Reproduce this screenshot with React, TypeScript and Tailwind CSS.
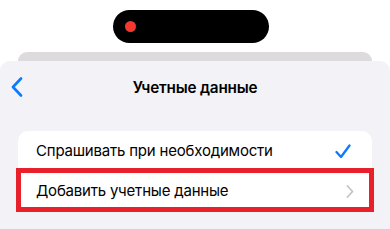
const font = { fontFamily: "Inter, 'Noto Sans', sans-serif" };

function BackChevron() {
  return (
    <svg width="12" height="20" viewBox="0 0 12 20" fill="none">
      <polyline points="10,1.5 2,10 10,18.5" stroke="#0a7aff" strokeWidth="2.6" strokeLinecap="round" strokeLinejoin="round" />
    </svg>
  );
}

function Check() {
  return (
    <svg width="16" height="15" viewBox="0 0 16 15" fill="none">
      <polyline points="1.5,8 6,13 14.5,1.5" stroke="#0a7aff" strokeWidth="2.3" strokeLinecap="round" strokeLinejoin="round" />
    </svg>
  );
}

function Chevron() {
  return (
    <svg width="8" height="13" viewBox="0 0 8 13" fill="none">
      <polyline points="1.5,1 6.5,6.5 1.5,12" stroke="#c4c4c7" strokeWidth="1.8" strokeLinecap="round" strokeLinejoin="round" />
    </svg>
  );
}

export default function App() {
  return (
    <div className="w-[390px] h-[229px] bg-white overflow-hidden flex flex-col" style={font}>
      {/* dynamic island */}
      <div className="pt-[10px] pl-[113px]">
        <div className="w-[156px] h-[33px] rounded-full bg-black flex items-center pl-[12px]">
          <div className="w-[11px] h-[11px] rounded-full bg-[#f4382e]" />
        </div>
      </div>

      {/* stacked sheet behind */}
      <div className="mt-[9px] mx-[18px] h-[9px] rounded-t-[10px] bg-[#dedbdf]" />

      {/* sheet */}
      <div className="flex-1 rounded-t-[10px] bg-[#f2f2f7] flex flex-col">
        <div className="relative h-[54px] flex items-center justify-center">
          <div className="absolute left-[11px] top-[16px]">
            <BackChevron />
          </div>
          <span className="text-[15.3px] font-semibold text-black tracking-[-0.2px]">Учетные данные</span>
        </div>

        <div className="mt-[16px] mx-[18px] bg-white rounded-[10px]">
          <div className="h-[40px] flex items-center justify-between pl-[18px] pr-[21px]">
            <span className="text-[15px] text-black tracking-[-0.2px]">Спрашивать при необходимости</span>
            <Check />
          </div>
          <div className="relative h-[40px] flex items-center justify-between pl-[18px] pr-[18px]">
            <span className="text-[15px] text-black tracking-[-0.2px]">Добавить учетные данные</span>
            <Chevron />
            <div className="absolute -left-[2px] -right-[2px] -top-[3px] -bottom-[1px] border-[5px] border-[#e8202a]" />
          </div>
        </div>
      </div>
    </div>
  );
}
